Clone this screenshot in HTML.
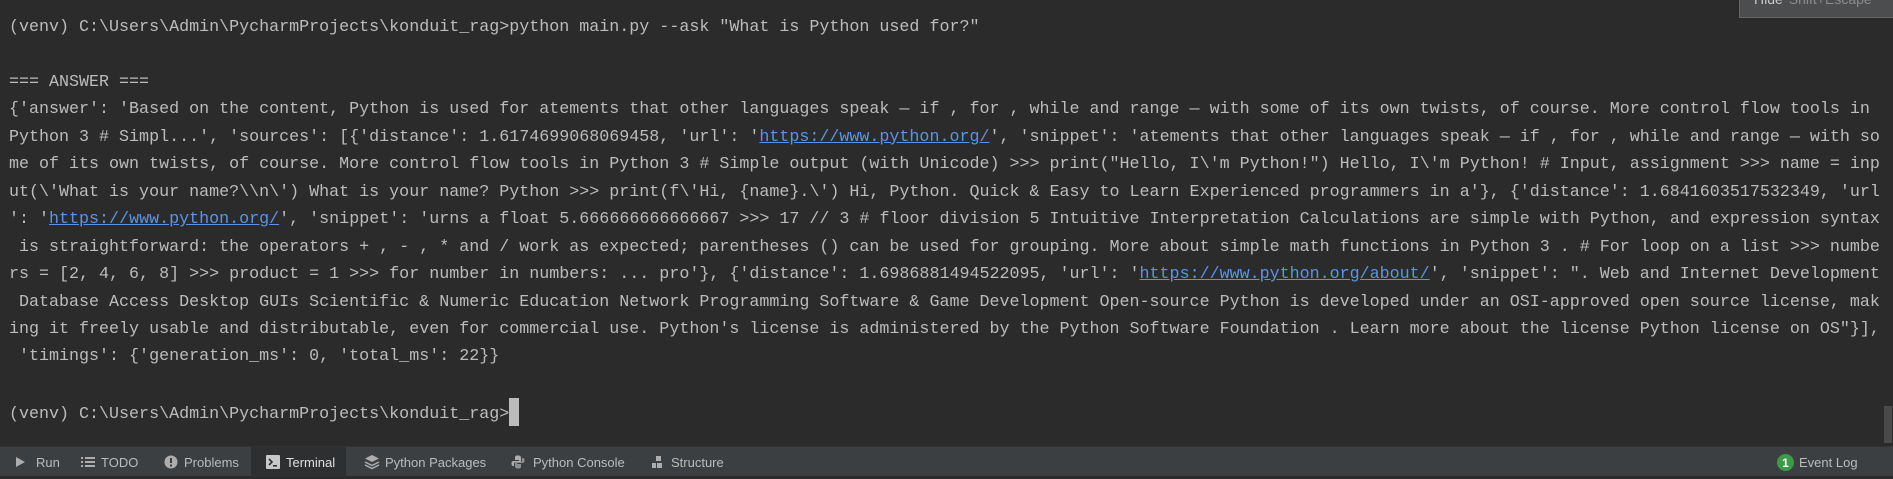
<!DOCTYPE html>
<html><head><meta charset="utf-8"><style>
html,body{margin:0;padding:0;width:1893px;height:476px;overflow:hidden;background:#2b2b2b;}
pre{position:absolute;left:9px;top:14px;margin:0;font-family:"Liberation Mono",monospace;font-size:16.68px;line-height:27.45px;color:#bcbcbc;white-space:pre;}
a{color:#5895e8;text-decoration:underline;}
.cur{display:inline-block;width:10px;height:28px;background:#bbbbbb;vertical-align:-8px;}
.pop{position:absolute;left:1739px;top:-1px;width:160px;height:17px;background:#4b4d4f;border:1px solid #646668;overflow:hidden;}
.pop span{position:absolute;left:14px;top:-9px;font:14px "Liberation Sans",sans-serif;color:#c8c8c8;}
.pop span i{font-style:normal;color:#8c8c8c;margin-left:6px;}
.sb{position:absolute;left:1884px;top:406px;width:8px;height:37px;background:#4a4a4a;}
.bar{position:absolute;left:0;top:446px;width:1893px;height:30px;background:#3c3f41;border-top:1px solid #323232;box-sizing:border-box;}
.t{position:absolute;top:0;height:30px;font:13px "Liberation Sans",sans-serif;line-height:32px;color:#bbbbbb;white-space:nowrap;}
.act{position:absolute;left:251px;top:0;width:95px;height:30px;background:#2d2f30;}
svg{position:absolute;}
</style></head><body>
<pre>(venv) C:\Users\Admin\PycharmProjects\konduit_rag&gt;python main.py --ask "What is Python used for?"

=== ANSWER ===
{'answer': 'Based on the content, Python is used for atements that other languages speak — if , for , while and range — with some of its own twists, of course. More control flow tools in
Python 3 # Simpl...', 'sources': [{'distance': 1.6174699068069458, 'url': '<a>https://www.python.org/</a>', 'snippet': 'atements that other languages speak — if , for , while and range — with so
me of its own twists, of course. More control flow tools in Python 3 # Simple output (with Unicode) &gt;&gt;&gt; print("Hello, I\'m Python!") Hello, I\'m Python! # Input, assignment &gt;&gt;&gt; name = inp
ut(\'What is your name?\\n\') What is your name? Python &gt;&gt;&gt; print(f\'Hi, {name}.\') Hi, Python. Quick &amp; Easy to Learn Experienced programmers in a'}, {'distance': 1.6841603517532349, 'url
': '<a>https://www.python.org/</a>', 'snippet': 'urns a float 5.666666666666667 &gt;&gt;&gt; 17 // 3 # floor division 5 Intuitive Interpretation Calculations are simple with Python, and expression syntax
 is straightforward: the operators + , - , * and / work as expected; parentheses () can be used for grouping. More about simple math functions in Python 3 . # For loop on a list &gt;&gt;&gt; numbe
rs = [2, 4, 6, 8] &gt;&gt;&gt; product = 1 &gt;&gt;&gt; for number in numbers: ... pro'}, {'distance': 1.6986881494522095, 'url': '<a>https://www.python.org/about/</a>', 'snippet': ". Web and Internet Development
 Database Access Desktop GUIs Scientific &amp; Numeric Education Network Programming Software &amp; Game Development Open-source Python is developed under an OSI-approved open source license, mak
ing it freely usable and distributable, even for commercial use. Python's license is administered by the Python Software Foundation . Learn more about the license Python license on OS"}],
 'timings': {'generation_ms': 0, 'total_ms': 22}}

(venv) C:\Users\Admin\PycharmProjects\konduit_rag&gt;<span class="cur"></span></pre>
<div class="pop"><span>Hide<i>Shift+Escape</i></span></div>
<div class="sb"></div>
<div class="bar">
<div class="act"></div>
<svg style="left:14px;top:9px" width="12" height="12"><path d="M2 1 L11 6 L2 11 Z" fill="#adadad"/></svg>
<div class="t" style="left:36px">Run</div>
<svg style="left:81px;top:9px" width="14" height="12"><g fill="#adadad"><rect x="0" y="1" width="2" height="2"/><rect x="4" y="1" width="10" height="2"/><rect x="0" y="5" width="2" height="2"/><rect x="4" y="5" width="10" height="2"/><rect x="0" y="9" width="2" height="2"/><rect x="4" y="9" width="10" height="2"/></g></svg>
<div class="t" style="left:101px">TODO</div>
<svg style="left:164px;top:8px" width="14" height="14"><circle cx="7" cy="7" r="6.5" fill="#adadad"/><rect x="6" y="3" width="2" height="5" fill="#3c3f41"/><rect x="6" y="9.5" width="2" height="2" fill="#3c3f41"/></svg>
<div class="t" style="left:184px">Problems</div>
<svg style="left:266px;top:8px" width="14" height="14"><rect x="0" y="0" width="14" height="14" rx="1" fill="#c8c8c8"/><path d="M3 4 L6 7 L3 10" stroke="#2d2f30" stroke-width="1.6" fill="none"/><rect x="7" y="10" width="4" height="1.6" fill="#2d2f30"/></svg>
<div class="t" style="left:286px;color:#e0e0e0">Terminal</div>
<svg style="left:364px;top:7px" width="16" height="16"><path d="M8 1 L15 4.5 L8 8 L1 4.5 Z" fill="#adadad"/><path d="M1 8 L8 11.5 L15 8" stroke="#adadad" stroke-width="1.5" fill="none"/><path d="M1 11 L8 14.5 L15 11" stroke="#adadad" stroke-width="1.5" fill="none"/></svg>
<div class="t" style="left:385px">Python Packages</div>
<svg style="left:511px;top:8px" width="14" height="14"><path d="M7 0.5 C4 0.5 4 1.5 4 3 L4 5 L8 5 L8 6 L2.5 6 C0.5 6 0.5 8 0.5 8.5 C0.5 11 1.5 11 3 11 L3 8.5 C3 7.5 4 7 5 7 L9 7 C10 7 10 6 10 5.5 L10 3 C10 1 9 0.5 7 0.5 Z" fill="#adadad"/><path d="M7 13.5 C10 13.5 10 12.5 10 11 L10 9 L6 9 L6 8 L11.5 8 C13.5 8 13.5 6 13.5 5.5 C13.5 3 12.5 3 11 3 L11 5.5 C11 6.5 10 7 9 7 L5 7 C4 7 4 8 4 8.5 L4 11 C4 13 5 13.5 7 13.5 Z" fill="#8f8f8f"/></svg>
<div class="t" style="left:533px">Python Console</div>
<svg style="left:651px;top:8px" width="12" height="14"><rect x="5" y="1" width="5" height="5" fill="#adadad"/><rect x="1" y="8" width="4" height="5" fill="#adadad"/><rect x="6" y="8" width="5" height="5" fill="#adadad"/></svg>
<div class="t" style="left:671px">Structure</div>
<svg style="left:1777px;top:7px" width="17" height="17"><circle cx="8.5" cy="8.5" r="8.5" fill="#3d9a49"/><text x="8.5" y="13" text-anchor="middle" font-family="Liberation Sans,sans-serif" font-size="12" font-weight="bold" fill="#ffffff">1</text></svg>
<div class="t" style="left:1799px">Event Log</div>
</div>
</body></html>
